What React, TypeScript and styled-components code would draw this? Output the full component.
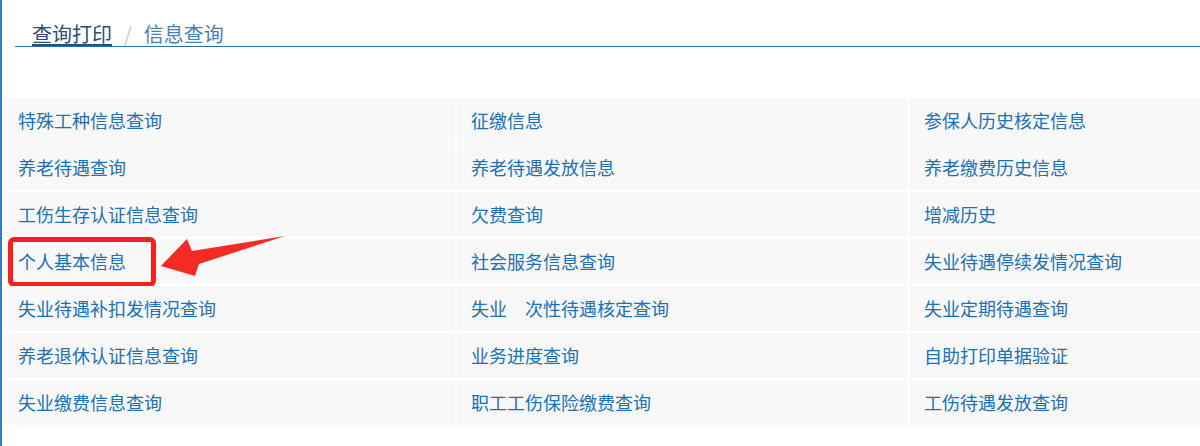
import styled, { createGlobalStyle } from 'styled-components';

const GlobalStyle = createGlobalStyle`
  html, body {
    margin: 0;
    padding: 0;
    background: #fff;
    overflow: hidden;
  }
  body {
    font-family: "Noto Sans CJK SC", "Noto Sans", sans-serif;
  }
`

const rows: string[][] = [
  ['特殊工种信息查询', '征缴信息', '参保人历史核定信息'],
  ['养老待遇查询', '养老待遇发放信息', '养老缴费历史信息'],
  ['工伤生存认证信息查询', '欠费查询', '增减历史'],
  ['个人基本信息', '社会服务信息查询', '失业待遇停续发情况查询'],
  ['失业待遇补扣发情况查询', '失业\u3000次性待遇核定查询', '失业定期待遇查询'],
  ['养老退休认证信息查询', '业务进度查询', '自助打印单据验证'],
  ['失业缴费信息查询', '职工工伤保险缴费查询', '工伤待遇发放查询'],
]

const HIGHLIGHTED = '个人基本信息'

export default function App() {
  return (
    <Page>
      <GlobalStyle />
      <Breadcrumb>
        <Crumb href="#">查询打印</Crumb>
        <Divider>/</Divider>
        <Current>信息查询</Current>
      </Breadcrumb>

      <Table>
        <tbody>
          {rows.map((row, i) => (
            <tr key={i}>
              {row.map((label) => (
                <Cell key={label}>
                  <Link href="#">{label}</Link>
                  {label === HIGHLIGHTED && (
                    <>
                      <Marker />
                      <Arrow viewBox="0 0 130 42" width="130" height="42">
                        <polygon points="2,31 28,4 33,16 126,1 40,29 36,41" fill="#f62a25" />
                      </Arrow>
                    </>
                  )}
                </Cell>
              ))}
            </tr>
          ))}
        </tbody>
      </Table>
    </Page>
  )
}

const Page = styled.div`
  min-height: 446px;
  border-left: 2px solid #3b78bd;
  box-sizing: border-box;
  width: 1200px;
  overflow: hidden;
`

const Breadcrumb = styled.div`
  display: flex;
  align-items: center;
  margin-left: 13px;
  padding: 22px 0 0 17px;
  height: 24px;
  border-bottom: 1px solid #2f6fa6;
  font-size: 20px;
  line-height: 24px;
`

const Crumb = styled.a`
  color: #2e4d70;
  text-decoration: underline;
  text-underline-offset: 2px;
`

const Divider = styled.span`
  color: #c8c8c8;
  margin: 0 12px;
`

const Current = styled.span`
  color: #4a80b3;
`

const Table = styled.table`
  margin-top: 49px;
  border-collapse: separate;
  border-spacing: 2px;
  width: 1361px;
  table-layout: fixed;
`

const Cell = styled.td`
  position: relative;
  height: 45px;
  padding: 0 0 0 14px;
  background: #f8f8f8;
  font-size: 18px;
  line-height: 45px;
  white-space: nowrap;
`

const Link = styled.a`
  color: #2170b2;
  text-decoration: none;
`

const Marker = styled.div`
  position: absolute;
  left: 4px;
  top: -2px;
  width: 148px;
  height: 50px;
  box-sizing: border-box;
  border: 5px solid #f8201c;
  border-radius: 6px;
  pointer-events: none;
`

const Arrow = styled.svg`
  position: absolute;
  left: 155px;
  top: -4px;
  pointer-events: none;
`
